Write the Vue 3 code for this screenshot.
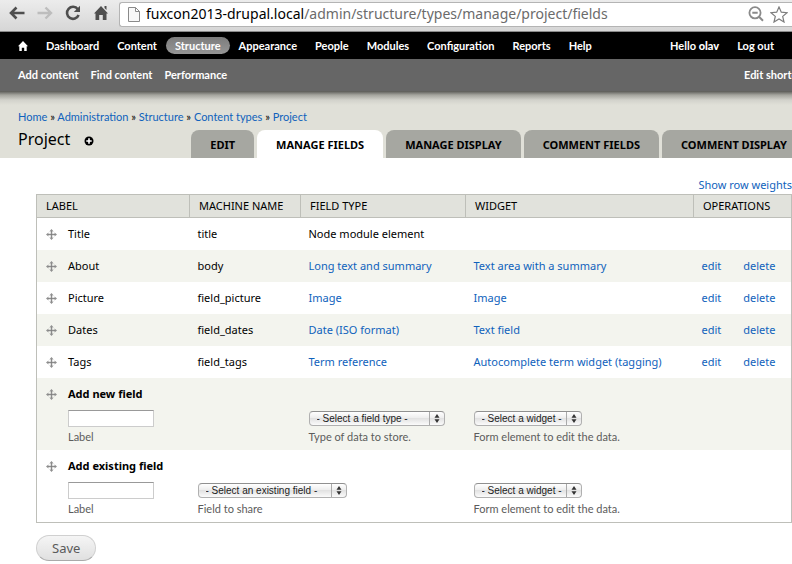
<script setup>
import { ref } from 'vue'

const url = ref('fuxcon2013-drupal.local/admin/structure/types/manage/project/fields')
const slash = url.value.indexOf('/')
const host = url.value.slice(0, slash)
const path = url.value.slice(slash)

const menu = ['Dashboard', 'Content', 'Structure', 'Appearance', 'People', 'Modules', 'Configuration', 'Reports', 'Help']
const shortcuts = ['Add content', 'Find content', 'Performance']
const crumbs = ['Home', 'Administration', 'Structure', 'Content types', 'Project']
const tabs = ['Edit', 'Manage fields', 'Manage display', 'Comment fields', 'Comment display']
const headings = ['Label', 'Machine name', 'Field type', 'Widget', 'Operations']

const fields = [
  { label: 'Title', name: 'title', type: 'Node module element', widget: '' },
  { label: 'About', name: 'body', type: 'Long text and summary', widget: 'Text area with a summary' },
  { label: 'Picture', name: 'field_picture', type: 'Image', widget: 'Image' },
  { label: 'Dates', name: 'field_dates', type: 'Date (ISO format)', widget: 'Text field' },
  { label: 'Tags', name: 'field_tags', type: 'Term reference', widget: 'Autocomplete term widget (tagging)' },
]
const newLabel = ref('')
const existingLabel = ref('')
</script>

<template>
  <div class="page">
    <svg class="defs" aria-hidden="true">
      <symbol id="move" viewBox="0 0 11 11">
        <path d="M5.500 1V10M1 5.500H10" stroke="#808080" stroke-width="1" />
        <path d="M5.500 0L7.600 2.500H3.400ZM5.500 11L7.600 8.500H3.400ZM0 5.500L2.500 3.400V7.600ZM11 5.500L8.500 3.400V7.600Z" fill="#909090" />
        <path d="M4 4H7V7H4Z" fill="none" stroke="#aaa" stroke-width=".6" />
      </symbol>
      <symbol id="updown" viewBox="0 0 6 9">
        <path d="M3 0L5.500 3.700H.5ZM3 9L5.500 5.300H.5Z" fill="#333" />
      </symbol>
    </svg>

    <div class="browser">
      <button class="nav" aria-label="Back">
        <svg width="16" height="14" viewBox="0 0 16 14"><path d="M15.500 7H2M7.500 1.500L2 7L7.500 12.500" fill="none" stroke="#4e4e4e" stroke-width="2.600" /></svg>
      </button>
      <button class="nav" aria-label="Forward">
        <svg width="16" height="14" viewBox="0 0 16 14"><path d="M.5 7H14M8.500 1.500L14 7L8.500 12.500" fill="none" stroke="#bdbdbd" stroke-width="2.400" /></svg>
      </button>
      <button class="nav" aria-label="Reload">
        <svg width="16" height="16" viewBox="0 0 16 16"><path d="M12.800 4.200A6 6 0 1 0 13.600 10" fill="none" stroke="#4e4e4e" stroke-width="2.600" /><path d="M15 .8V7H8.800Z" fill="#4e4e4e" /></svg>
      </button>
      <button class="nav" aria-label="Home page">
        <svg width="16" height="16" viewBox="0 0 16 16"><path d="M8 1L15 8.500H13.500V15H9.800V10H6.200V15H2.500V8.500H1ZM11.500 1H13.500V5L11.500 3Z" fill="#4e4e4e" /></svg>
      </button>
      <div class="address">
        <svg width="12" height="15" viewBox="0 0 12 15"><path d="M.5 .5H7.500L11.500 4.500V14.500H.5ZM7.500 .5V4.500H11.500" fill="#f8f8f8" stroke="#8a8a8a" /></svg>
        <p class="url">{{ host }}<span>{{ path }}</span></p>
        <button class="nav" aria-label="Zoom">
          <svg width="16" height="16" viewBox="0 0 16 16"><circle cx="7" cy="6.800" r="5.600" fill="none" stroke="#8a8a8a" stroke-width="1.800" /><path d="M4.300 6.800H9.700M11 10.800L15 14.800" stroke="#8a8a8a" stroke-width="2" /></svg>
        </button>
        <button class="nav" aria-label="Bookmark this page">
          <svg width="18" height="17" viewBox="0 0 18 17"><path d="M9 1L11.300 6.200L17 6.700L12.700 10.400L14 16L9 13L4 16L5.300 10.400L1 6.700L6.700 6.200Z" fill="#fff" stroke="#7d7d7d" stroke-width="1.200" /></svg>
        </button>
      </div>
    </div>

    <nav class="toolbar">
      <a class="home" href="#" aria-label="Home">
        <svg width="10" height="10" viewBox="0 0 10 10"><path d="M5 0L10 5.200H8.700V10H6.200V6.800H3.800V10H1.300V5.200H0Z" fill="#fff" /></svg>
      </a>
      <a v-for="m in menu" :key="m" href="#" :class="{ current: m === 'Structure' }">{{ m }}</a>
      <span class="user">
        <a href="#">Hello <strong>olav</strong></a>
        <a href="#">Log out</a>
      </span>
    </nav>
    <nav class="shortcuts">
      <a v-for="s in shortcuts" :key="s" href="#">{{ s }}</a>
      <a class="edit-shortcuts" href="#">Edit shortcuts</a>
    </nav>

    <header class="branding">
      <p class="crumbs">
        <template v-for="(c, i) in crumbs" :key="c"><template v-if="i"> » </template><a href="#">{{ c }}</a></template>
      </p>
      <div class="title-row">
        <h1>Project</h1>
        <button class="nav add" aria-label="Add to shortcuts">
          <svg width="10" height="10" viewBox="0 0 10 10"><circle cx="5" cy="5" r="4.500" fill="#000" /><path d="M5 2.300V7.700M2.300 5H7.700" stroke="#fff" stroke-width="1.600" /></svg>
        </button>
        <nav class="tabs">
          <a v-for="t in tabs" :key="t" href="#" :class="{ active: t === 'Manage fields' }">{{ t }}</a>
        </nav>
      </div>
    </header>

    <main>
      <a class="weights" href="#">Show row weights</a>
      <table>
        <colgroup><col class="c1" /><col class="c2" /><col class="c3" /><col /><col class="c5" /></colgroup>
        <thead>
          <tr><th v-for="h in headings" :key="h" scope="col">{{ h }}</th></tr>
        </thead>
        <tbody>
          <tr v-for="f in fields" :key="f.name">
            <td><div class="handle"><svg class="move"><use href="#move" /></svg>{{ f.label }}</div></td>
            <td>{{ f.name }}</td>
            <td><a v-if="f.widget" href="#">{{ f.type }}</a><template v-else>{{ f.type }}</template></td>
            <td><a v-if="f.widget" href="#">{{ f.widget }}</a></td>
            <td><div v-if="f.widget" class="ops"><a href="#">edit</a><a href="#">delete</a></div></td>
          </tr>
          <tr class="form-row">
            <td>
              <div class="handle"><svg class="move"><use href="#move" /></svg><strong>Add new field</strong></div>
              <div class="text-field"><input id="new-label" v-model="newLabel" type="text" /><label for="new-label">Label</label></div>
            </td>
            <td></td>
            <td>
              <div class="choice wide"><select id="new-type"><option>- Select a field type -</option></select><svg><use href="#updown" /></svg></div>
              <label for="new-type">Type of data to store.</label>
            </td>
            <td>
              <div class="choice"><select id="new-widget"><option>- Select a widget -</option></select><svg><use href="#updown" /></svg></div>
              <label for="new-widget">Form element to edit the data.</label>
            </td>
            <td></td>
          </tr>
          <tr class="form-row">
            <td>
              <div class="handle"><svg class="move"><use href="#move" /></svg><strong>Add existing field</strong></div>
              <div class="text-field"><input id="existing-label" v-model="existingLabel" type="text" /><label for="existing-label">Label</label></div>
            </td>
            <td colspan="2">
              <div class="choice widest"><select id="existing-field"><option>- Select an existing field -</option></select><svg><use href="#updown" /></svg></div>
              <label for="existing-field">Field to share</label>
            </td>
            <td>
              <div class="choice"><select id="existing-widget"><option>- Select a widget -</option></select><svg><use href="#updown" /></svg></div>
              <label for="existing-widget">Form element to edit the data.</label>
            </td>
            <td></td>
          </tr>
        </tbody>
      </table>
      <button class="save">Save</button>
    </main>
  </div>
</template>

<style>
body { background: #fff; }
</style>

<style scoped>
.page { font: 11px/16px "Noto Sans", sans-serif; color: #000; overflow: hidden; }
.defs { position: absolute; width: 0; height: 0; }
a { color: #0f62bc; text-decoration: none; white-space: nowrap; }
svg { display: block; flex: none; }
p, h1 { margin: 0; }
.nav { border: 0; padding: 0; background: none; flex: none; }

.browser { display: flex; align-items: center; gap: 12px; height: 32px; box-sizing: border-box; padding: 0 0 5px 9px; background: linear-gradient(#ececec, #d6d6d6); border-bottom: 1px solid #8a8a8a; }
.address { flex: 1; display: flex; align-items: center; gap: 6px; height: 25px; box-sizing: border-box; margin-top: 2px; margin-left: -2px; padding: 0 4px 0 8px; background: #fff; border: 1px solid #b4b4b4; border-right: 0; border-radius: 3px 0 0 3px; min-width: 0; }
.url { flex: 1; font-size: 14px; line-height: 20px; white-space: nowrap; }
.url span { color: #6b6b6b; }

.toolbar { display: flex; align-items: center; height: 27px; padding: 0 9px 0 10px; background: #000; font: 700 11px/17px Lato, sans-serif; }
.toolbar a { color: #fff; padding: 0 9px; border-radius: 9px; }
.toolbar .home { padding: 0 9px 0 8px; }
.toolbar .current { background: linear-gradient(#7c7c7c, #969696); }
.user { display: flex; margin-left: auto; }
.user strong { font-weight: 900; }

.shortcuts { display: flex; align-items: center; gap: 12px; height: 32px; padding: 0 18px; background: #666; font: 700 11px/16px Lato, sans-serif; }
.shortcuts a { color: #fff; }
.edit-shortcuts { margin-left: auto; width: 30px; }

.branding { background: linear-gradient(#595955, #a5a59e 4px, #d2d2cb 9px, #e0e0d8 14px); padding: 18px 0 0 18px; }
.crumbs { font: 11px/16px Lato, sans-serif; }
.title-row { display: flex; align-items: flex-start; height: 33px; }
h1 { font-size: 16px; line-height: 28px; font-weight: 400; }
.add { margin: 11px 0 0 14px; }
.tabs { display: flex; gap: 3px; align-self: flex-end; margin-left: 97px; }
.tabs a { padding: 0 19px; line-height: 30px; height: 28px; border-radius: 8px 8px 0 0; background: #a6a7a1; color: #000; font-weight: 700; text-transform: uppercase; }
.tabs .active { background: #fff; }

main { display: flex; flex-direction: column; align-items: flex-start; padding: 18px 0 4px 36px; }
.weights { align-self: flex-end; line-height: 18px; }
table { width: 100%; table-layout: fixed; border-collapse: collapse; border: 1px solid #bebfb9; }
.c1 { width: 153px; } .c2 { width: 111px; } .c3 { width: 165px; } .c5 { width: 98px; }
th { height: 23px; padding: 0 9px; box-sizing: border-box; background: #e1e2dc; border: 1px solid #bebfb9; font-weight: 400; text-align: left; text-transform: uppercase; white-space: nowrap; }
td { padding: 8px; white-space: nowrap; }
tbody tr:nth-child(even) { background: #f3f4ee; }
.handle { display: flex; align-items: center; gap: 11px; padding-left: 1px; }
.move { width: 11px; height: 11px; }
.ops { display: flex; gap: 22px; }
.form-row td { padding-bottom: 5px; vertical-align: bottom; }
.text-field { margin: 8px 0 0 23px; }
input { display: block; width: 86px; height: 17px; box-sizing: border-box; margin-bottom: 2px; padding: 0 2px; border: 1px solid #ccc; border-top-color: #999; background: #fff; font: inherit; }
label { display: block; color: #5c5c5c; font: 11px/16px Lato, sans-serif; }
.choice { position: relative; width: 108px; margin-bottom: 3px; }
.wide { width: 136px; }
.widest { width: 149px; }
select { display: block; appearance: none; width: 100%; height: 15px; box-sizing: border-box; padding: 0 7px; border: 1px solid #b0b0b0; border-top-color: #909090; border-radius: 4px; background: linear-gradient(#aaa, #aaa) right 14px top / 1px 100% no-repeat, linear-gradient(#fff, #ececec 50%, #e2e2e2 50%, #fbfbfb); font: 10px/13px "Liberation Sans", sans-serif; color: #222; }
.choice svg { position: absolute; right: 5px; top: 3px; width: 6px; height: 9px; pointer-events: none; }
.save { margin-top: 12px; height: 26px; padding: 0 15px; border: 1px solid #d0d0d0; border-bottom-color: #aaa; border-radius: 13px; background: linear-gradient(#f5f5f5, #e0e0e0); font: 13px/22px "Noto Sans", sans-serif; color: #5a5a5a; }
</style>
